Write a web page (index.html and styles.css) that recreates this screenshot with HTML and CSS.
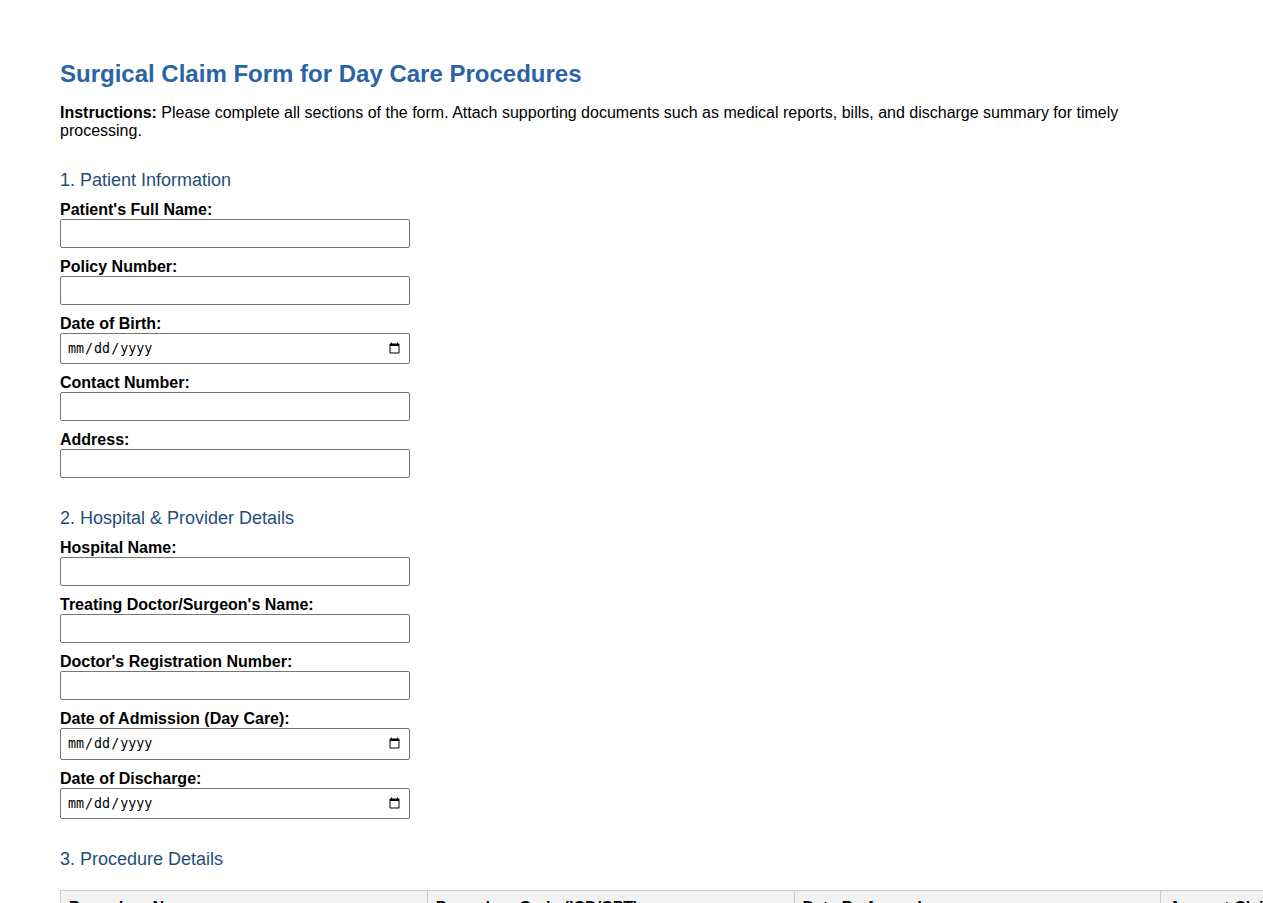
FILE: index.html
```html
<!DOCTYPE html>
<html lang="en">
<head>
    <meta charset="UTF-8">
    <meta name="viewport" content="width=device-width, initial-scale=1.0">
    <title>Surgical Claim Form for Day Care Procedures</title>
    <link rel="stylesheet" href="styles.css">
</head>
<body>

    <div class="container">
        <h2>Surgical Claim Form for Day Care Procedures</h2>

        <p class="instructions"><strong>Instructions:</strong> Please complete all sections of the form. Attach supporting documents such as medical reports, bills, and discharge summary for timely processing.</p>

        <h3>1. Patient Information</h3>
        <div class="form-group">
            <label for="patientName">Patient's Full Name:</label>
            <input type="text" id="patientName">
        </div>
        <div class="form-group">
            <label for="policyNumber">Policy Number:</label>
            <input type="text" id="policyNumber">
        </div>
        <div class="form-group">
            <label for="dob">Date of Birth:</label>
            <input type="date" id="dob">
        </div>
        <div class="form-group">
            <label for="contact">Contact Number:</label>
            <input type="text" id="contact">
        </div>
        <div class="form-group">
            <label for="address">Address:</label>
            <input type="text" id="address">
        </div>

        <h3>2. Hospital &amp; Provider Details</h3>
        <div class="form-group">
            <label for="hospitalName">Hospital Name:</label>
            <input type="text" id="hospitalName">
        </div>
        <div class="form-group">
            <label for="doctorName">Treating Doctor/Surgeon's Name:</label>
            <input type="text" id="doctorName">
        </div>
        <div class="form-group">
            <label for="doctorReg">Doctor's Registration Number:</label>
            <input type="text" id="doctorReg">
        </div>
        <div class="form-group">
            <label for="admissionDate">Date of Admission (Day Care):</label>
            <input type="date" id="admissionDate">
        </div>
        <div class="form-group">
            <label for="dischargeDate">Date of Discharge:</label>
            <input type="date" id="dischargeDate">
        </div>

        <h3>3. Procedure Details</h3>
        <table class="procedure-table">
            <thead>
                <tr>
                    <th>Procedure Name</th>
                    <th>Procedure Code (ICD/CPT)</th>
                    <th>Date Performed</th>
                    <th>Amount Claimed</th>
                </tr>
            </thead>
            <tbody>
                <tr>
                    <td><input type="text"></td>
                    <td><input type="text"></td>
                    <td><input type="date"></td>
                    <td><input type="number"></td>
                </tr>
            </tbody>
        </table>
    </div>

</body>
</html>
```

FILE: styles.css
```css
body {
    font-family: "Liberation Sans", Arial, sans-serif;
    margin: 0;
    padding: 0;
    background-color: #FFFFFF;
    color: #000;
}
.container {
    max-width: 1100px;
    padding: 60px;
}
h2 {
    font-size: 24px;
    color: #2a64a6;
    margin: 0 0 16px;
}
.instructions {
    font-size: 16px;
    margin: 0;
}
h3 {
    font-size: 18px;
    font-weight: normal;
    color: #1f4e79;
    margin: 30px 0 10px;
}
.form-group {
    margin-bottom: 10px;
}
label {
    display: block;
    font-weight: bold;
    font-size: 16px;
}
input {
    width: 350px;
    padding: 6px;
    box-sizing: border-box;
    border: 1px solid #767676;
    border-radius: 2px;
}
.procedure-table {
    border-collapse: collapse;
    table-layout: fixed;
    width: 1468px;
    margin-top: 20px;
}
.procedure-table th,
.procedure-table td {
    border: 1px solid #ccc;
    padding: 8px;
    text-align: left;
}
.procedure-table th {
    background: #f2f2f2;
    font-size: 16px;
}
.procedure-table td input {
    width: 100%;
}
```
